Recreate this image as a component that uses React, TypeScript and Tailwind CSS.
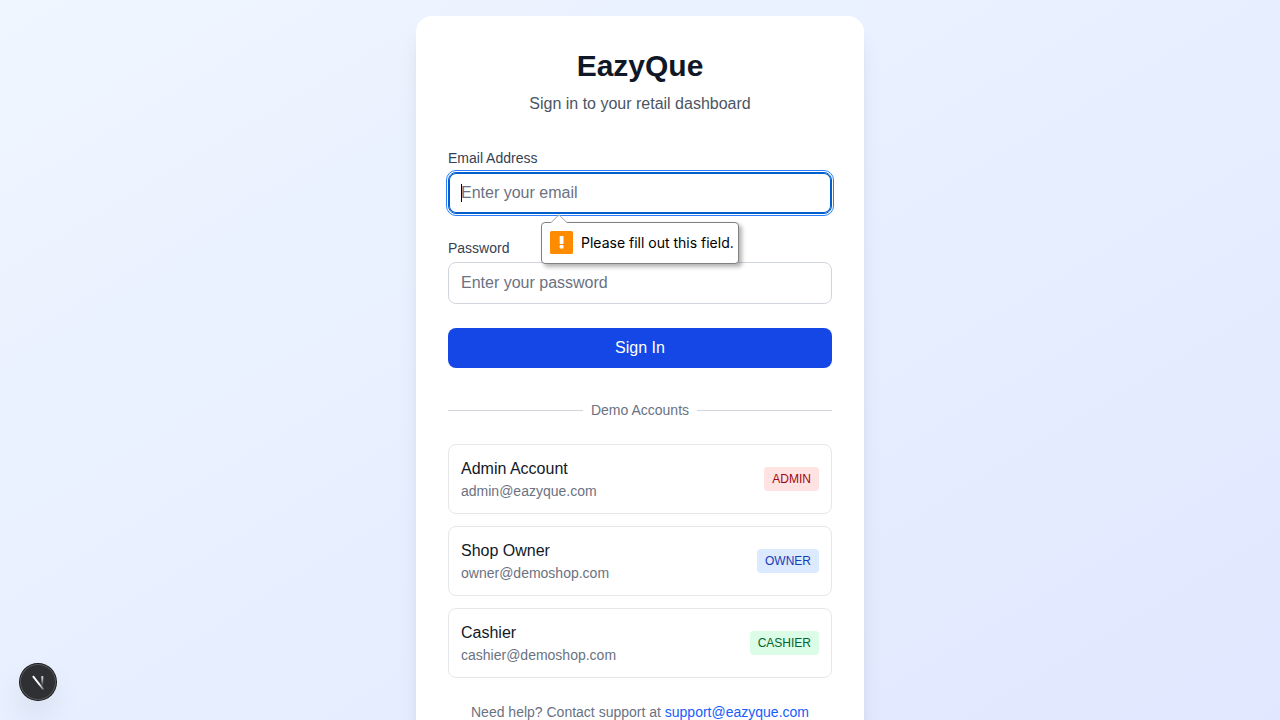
import React from 'react';

const accounts = [
  { name: 'Admin Account', email: 'admin@eazyque.com', role: 'ADMIN', tone: 'bg-red-100 text-red-800' },
  { name: 'Shop Owner', email: 'owner@demoshop.com', role: 'OWNER', tone: 'bg-blue-100 text-blue-800' },
  { name: 'Cashier', email: 'cashier@demoshop.com', role: 'CASHIER', tone: 'bg-green-100 text-green-800' },
];

function ValidationBubble() {
  return (
    <div role="alert" className="absolute top-[50px] left-[93px] z-10 flex h-[42px] items-start gap-2 rounded-[4px] border border-[#808080] bg-white py-2 pr-1 pl-2 whitespace-nowrap shadow-[3px_3px_4px_rgba(0,0,0,0.3)]">
      <svg className="absolute -top-[9px] left-2 h-[10px] w-[18px]" viewBox="0 0 18 10" aria-hidden="true">
        <path d="M1 10 V8.6 L9 0.7 L17 8.6 V10 Z" fill="#fff" />
        <path d="M0.5 8.7 L1.5 8.2 L9 0.7 L16.5 8.2 L17.5 8.7" fill="none" stroke="#a0a0a0" />
      </svg>
      <svg className="size-[23px]" viewBox="0 0 23 23" aria-hidden="true">
        <rect width="23" height="23" rx="1.5" fill="#ff8c00" />
        <rect x="9.7" y="5" width="3.8" height="8" rx="0.8" fill="#fff" />
        <rect x="9.7" y="14" width="3.8" height="3.6" rx="1.2" fill="#fff" />
      </svg>
      <span className="font-[Inter,sans-serif] text-[14px] leading-6 text-black">Please fill out this field.</span>
    </div>
  );
}

export default function App() {
  return (
    <div className="flex min-h-screen items-center justify-center bg-gradient-to-br from-[#eff6ff] to-[#e0e7ff] p-4 font-['Liberation_Sans',Arial,sans-serif]">
      <main className="w-full max-w-md rounded-2xl bg-white p-8 shadow-xl">
        <header className="mb-8 text-center">
          <h1 className="mb-2 text-3xl font-bold text-gray-900">EazyQue</h1>
          <p className="text-gray-600">Sign in to your retail dashboard</p>
        </header>

        <form className="space-y-6" noValidate onSubmit={(e: React.FormEvent) => e.preventDefault()}>
          <div>
            <label htmlFor="email" className="mb-1 block text-sm text-gray-700">Email Address</label>
            <div className="relative">
              <input
                id="email"
                type="email"
                placeholder="Enter your email"
                className="block w-full rounded-lg border border-[#005fcc] px-3 py-2 text-gray-900 caret-transparent shadow-[inset_0_0_0_1px_#005fcc] outline-1 outline-offset-1 outline-[#2b7fff] outline-solid placeholder:text-gray-500"
              />
              <span className="absolute top-3 left-[13px] h-[18px] w-px bg-black" aria-hidden="true" />
              <ValidationBubble />
            </div>
          </div>
          <div>
            <label htmlFor="password" className="mb-1 block text-sm text-gray-700">Password</label>
            <input
              id="password"
              type="password"
              placeholder="Enter your password"
              className="block w-full rounded-lg border border-gray-300 px-3 py-2 text-gray-900 placeholder:text-gray-500"
            />
          </div>
          <button type="submit" className="block w-full rounded-lg bg-[#1447e6] px-4 py-2 text-white">Sign In</button>
        </form>

        <section className="mt-8">
          <div className="flex items-center gap-2">
            <div className="h-px flex-1 bg-gray-300" />
            <h2 className="text-sm text-gray-500">Demo Accounts</h2>
            <div className="h-px flex-1 bg-gray-300" />
          </div>
          <div className="mt-6 space-y-3">
            {accounts.map((a) => (
              <button key={a.role} type="button" className="flex w-full items-center justify-between rounded-lg border border-gray-200 p-3 text-left">
                <span>
                  <span className="block text-gray-900">{a.name}</span>
                  <span className="block text-sm text-gray-500">{a.email}</span>
                </span>
                <span className={`rounded px-2 py-1 text-xs ${a.tone}`}>{a.role}</span>
              </button>
            ))}
          </div>
        </section>

        <p className="mt-6 text-center text-sm text-gray-500">
          Need help? Contact support at <a href="mailto:support@eazyque.com" className="text-blue-600">support@eazyque.com</a>
        </p>
      </main>

      <button type="button" aria-label="Open developer tools" className="fixed bottom-5 left-5 size-9 rounded-full bg-[#2f3033] shadow-[0_0_0_1px_#171717,inset_0_0_0_1px_#555658,0_16px_32px_-8px_rgba(0,0,0,0.24)]">
        <svg viewBox="0 0 36 36" className="size-9" fill="none" aria-hidden="true">
          <defs>
            <linearGradient id="stem" x1="0" y1="12" x2="0" y2="22" gradientUnits="userSpaceOnUse">
              <stop stopColor="#fff" stopOpacity="0.95" />
              <stop offset="1" stopColor="#fff" stopOpacity="0" />
            </linearGradient>
            <linearGradient id="diagonal" x1="19" y1="20" x2="23.5" y2="25.5" gradientUnits="userSpaceOnUse">
              <stop stopColor="#fff" />
              <stop offset="1" stopColor="#fff" stopOpacity="0.3" />
            </linearGradient>
          </defs>
          <path d="M12.9 12.2 L23.4 25.5" stroke="url(#diagonal)" strokeWidth="1.9" />
          <path d="M22.3 12.2 V22" stroke="url(#stem)" strokeWidth="1.9" />
        </svg>
      </button>
    </div>
  );
}
